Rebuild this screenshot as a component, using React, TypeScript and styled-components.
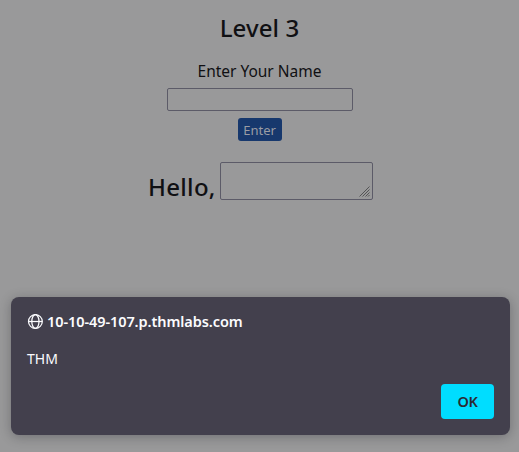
import React from "react";
import styled, { createGlobalStyle } from "styled-components";

const GlobalStyle = createGlobalStyle`
  * { box-sizing: border-box; }
  body { margin: 0; background: #99999a; font-family: "Noto Sans", "Open Sans", sans-serif; }
`;

const Screen = styled.div`
  display: flex;
  flex-direction: column;
  width: 519px;
  height: 452px;
  overflow: hidden;
  background: #99999a;
  color: #101013;
`;

const Form = styled.main`
  display: flex;
  flex-direction: column;
  align-items: center;
  height: 297px;
  padding-top: 12px;
`;

const Title = styled.h1`
  margin: 0;
  font-size: 24px;
  font-weight: 500;
  line-height: 32px;
  letter-spacing: 0.1px;
  white-space: nowrap;
`;

const Label = styled.label`
  margin-top: 16px;
  font-size: 15.5px;
  line-height: 22px;
  letter-spacing: -0.02px;
`;

const NameInput = styled.input`
  width: 186px;
  height: 23px;
  margin-top: 6px;
  border: 1px solid #5c5b68;
  border-radius: 2px;
  background: transparent;
  outline: none;
`;

const EnterButton = styled.button`
  width: 44px;
  height: 23px;
  margin-top: 7px;
  padding: 1px 0 0;
  border: 0;
  border-radius: 3px;
  background: #17386d;
  color: #9a9ca4;
  font-family: inherit;
  font-size: 13px;
  line-height: 22px;
`;

const Greeting = styled.div`
  display: flex;
  gap: 6px;
  width: 225px;
  height: 38px;
  margin: 21px 0 0 2px;
`;

const GreetingText = styled(Title)`
  width: 66px;
  margin-top: 9px;
  letter-spacing: 0.3px;
`;

const OutputBox = styled.div`
  display: flex;
  align-items: flex-end;
  justify-content: flex-end;
  width: 153px;
  height: 38px;
  padding: 0 2px 2px 0;
  border: 1px solid #5c5b68;
  border-radius: 2px;
`;

const Dialog = styled.section`
  display: flex;
  flex-direction: column;
  width: 499px;
  height: 138px;
  margin-left: 11px;
  padding: 14px 16px 16px;
  border-radius: 8px;
  background: #43404d;
  color: #fbfbfe;
  box-shadow: 0 2px 12px rgba(20, 20, 25, 0.3);
`;

const Origin = styled.div`
  display: flex;
  align-items: center;
  gap: 4px;
  height: 22px;
  font-size: 14.5px;
  font-weight: 600;
  line-height: 20px;
  letter-spacing: -0.08px;
  white-space: nowrap;
`;

const OriginHost = styled.span`
  padding-bottom: 2px;
`;

const Message = styled.div`
  height: 22px;
  margin-top: 15px;
  font-size: 14px;
  line-height: 22px;
`;

const OkButton = styled.button`
  align-self: flex-end;
  width: 53px;
  height: 35px;
  margin-top: 14px;
  padding: 0;
  border: 0;
  border-radius: 4px;
  background: #00ddff;
  color: #2b2a33;
  font-family: inherit;
  font-size: 14.5px;
  font-weight: 600;
  line-height: 35px;
  letter-spacing: -0.3px;
`;

const GlobeIcon = () => (
  <svg width="16" height="16" viewBox="0 0 16 16" fill="none" stroke="#fbfbfe" strokeWidth="1.25">
    <circle cx="8.4" cy="7.5" r="6.9" />
    <ellipse cx="8.4" cy="7.5" rx="3.6" ry="6.9" />
    <path d="M1.5 7.5h13.8" />
  </svg>
);

const ResizeGrip = () => (
  <svg width="11" height="11" viewBox="0 0 11 11" fill="none" stroke="#4c4c4d" strokeWidth="0.9">
    <path d="M0.5 10.5L10.5 0.5M3.5 10.5L10.5 3.5M6.5 10.5L10.5 6.5M9 10.5L10.5 9" />
  </svg>
);

export default function App() {
  return (
    <Screen>
      <GlobalStyle />
      <Form>
        <Title>Level 3</Title>
        <Label htmlFor="name">Enter Your Name</Label>
        <NameInput id="name" />
        <EnterButton>Enter</EnterButton>
        <Greeting>
          <GreetingText as="h2">Hello,</GreetingText>
          <OutputBox>
            <ResizeGrip />
          </OutputBox>
        </Greeting>
      </Form>
      <Dialog role="alertdialog">
        <Origin>
          <GlobeIcon />
          <OriginHost>10-10-49-107.p.thmlabs.com</OriginHost>
        </Origin>
        <Message>THM</Message>
        <OkButton>OK</OkButton>
      </Dialog>
    </Screen>
  );
}
